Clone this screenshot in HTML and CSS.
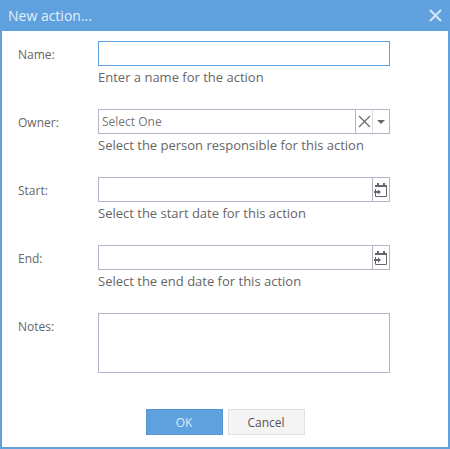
FILE: index.html
```html
<!DOCTYPE html>
<html lang="en">
<head>
  <meta charset="UTF-8">
  <title>New action</title>
  <link rel="stylesheet" href="styles.css">
</head>
<body>
  <div class="dialog">
    <div class="dialog-title">
      <span>New action...</span>
      <svg class="close-icon" width="13" height="13" viewBox="0 0 13 13"><path d="M1 1l11 11M12 1L1 12" /></svg>
    </div>
    <div class="dialog-body">
      <div class="row">
        <label>Name:</label>
        <div class="field">
          <input class="text-input focused" type="text">
          <div class="hint">Enter a name for the action</div>
        </div>
      </div>
      <div class="row">
        <label>Owner:</label>
        <div class="field">
          <div class="combo">
            <span class="combo-text">Select One</span>
            <span class="combo-btn clear">
              <svg width="13" height="13" viewBox="0 0 13 13"><path d="M1 1l11 11M12 1L1 12" /></svg>
            </span>
            <span class="combo-btn arrow"><i></i></span>
          </div>
          <div class="hint">Select the person responsible for this action</div>
        </div>
      </div>
      <div class="row">
        <label>Start:</label>
        <div class="field">
          <div class="combo">
            <span class="combo-text"></span>
            <span class="combo-btn date">
              <svg width="14" height="16" viewBox="0 0 14 16"><path class="cal" d="M1.5 7V14.5H12.5V3.500H1.500V5" /><path class="cal-bar" d="M1 3h12v2H1zM3 1h2v2H3zM9 1h2v2H9z" /><path class="cal-mark" d="M0 9h4V7.500L7 10l-3 2.500V11H0z" /></svg>
            </span>
          </div>
          <div class="hint">Select the start date for this action</div>
        </div>
      </div>
      <div class="row">
        <label>End:</label>
        <div class="field">
          <div class="combo">
            <span class="combo-text"></span>
            <span class="combo-btn date">
              <svg width="14" height="16" viewBox="0 0 14 16"><path class="cal" d="M1.5 7V14.5H12.5V3.500H1.500V5" /><path class="cal-bar" d="M1 3h12v2H1zM3 1h2v2H3zM9 1h2v2H9z" /><path class="cal-mark" d="M0 9h4V7.500L7 10l-3 2.500V11H0z" /></svg>
            </span>
          </div>
          <div class="hint">Select the end date for this action</div>
        </div>
      </div>
      <div class="row notes-row">
        <label>Notes:</label>
        <div class="field">
          <textarea class="notes"></textarea>
        </div>
      </div>
      <div class="buttons">
        <button class="btn btn-ok">OK</button>
        <button class="btn btn-cancel">Cancel</button>
      </div>
    </div>
  </div>
</body>
</html>
```

FILE: styles.css
```css
* {
  box-sizing: border-box;
}

body {
  margin: 0;
  font-family: 'Open Sans', sans-serif;
  font-size: 12px;
  color: #666;
  background: #fff;
}

.dialog {
  width: 450px;
  height: 449px;
  border: 2px solid #5ea1de;
  border-top: 0;
  display: flex;
  flex-direction: column;
}

.dialog-title {
  height: 31px;
  flex: none;
  background: #5ea1de;
  color: #e4eff9;
  font-size: 14px;
  padding: 0 8px;
  margin: 0 -2px;
  display: flex;
  align-items: center;
  justify-content: space-between;
}

.close-icon path {
  fill: none;
  stroke: #d6e7f7;
  stroke-width: 2;
}

.dialog-body {
  flex: 1;
  padding: 10px 58px 0 16px;
  display: flex;
  flex-direction: column;
}

.row {
  display: flex;
  height: 68px;
}

.row label {
  width: 80px;
  flex: none;
  padding-top: 5px;
  font-size: 12px;
}

.field {
  flex: 1;
}

.text-input,
.combo {
  display: block;
  width: 100%;
  height: 25px;
  border: 1px solid #b4b4c8;
  background: #fff;
  margin: 0;
}

.text-input.focused {
  border-color: #5ea1de;
  outline: none;
}

.hint {
  margin-top: 2px;
  font-size: 13px;
  line-height: 18px;
}

.combo {
  display: flex;
  align-items: stretch;
}

.combo-text {
  flex: 1;
  padding-left: 3px;
  font-size: 12px;
  line-height: 23px;
  color: #777;
}

.combo-btn {
  flex: none;
  border-left: 1px solid #b4b4c8;
  display: flex;
  align-items: center;
  justify-content: center;
}

.clear {
  width: 17px;
}

.clear path {
  fill: none;
  stroke: #666;
  stroke-width: 1.1;
}

.arrow {
  width: 17px;
  border-left-color: #ddd;
}

.arrow i {
  width: 0;
  height: 0;
  border-left: 4px solid transparent;
  border-right: 4px solid transparent;
  border-top: 4px solid #666;
}

.date {
  width: 17px;
}

.cal {
  fill: none;
  stroke: #666;
  stroke-width: 1;
}

.cal-bar,
.cal-mark {
  fill: #666;
}

.notes-row {
  height: 87px;
}

.notes {
  display: block;
  width: 100%;
  height: 60px;
  border: 1px solid #b4b4c8;
  resize: none;
  margin: 0;
}

.buttons {
  display: flex;
  justify-content: center;
  gap: 5px;
  margin-top: 9px;
  padding-left: 42px;
}

.btn {
  width: 77px;
  height: 26px;
  font-family: 'Open Sans', sans-serif;
  font-size: 12px;
  padding: 0;
}

.btn-ok {
  background: #5ea1de;
  border: 1px solid #5596d2;
  color: #dfecf8;
}

.btn-cancel {
  background: #f4f4f4;
  border: 1px solid #e2e2e2;
  color: #555;
}
```
